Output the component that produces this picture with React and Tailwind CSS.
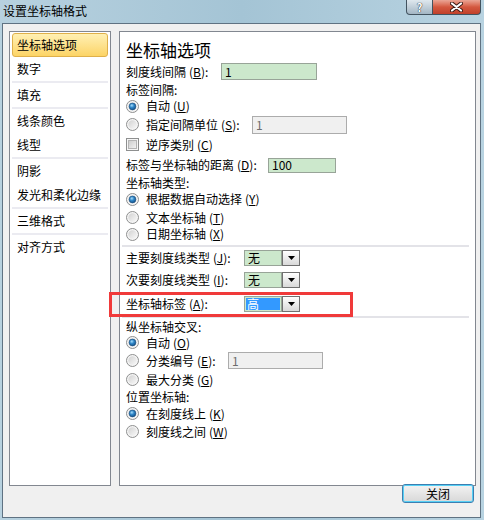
import React from "react";

// win7 style radio
const Radio = ({ on }) => (
  <svg width="13" height="13" viewBox="0 0 13 13" className="shrink-0">
    <defs>
      <linearGradient id="rgRing" x1="0" y1="0" x2="1" y2="1">
        <stop offset="0" stopColor="#d2d2d2" />
        <stop offset="1" stopColor="#f8f8f8" />
      </linearGradient>
      <radialGradient id="rgDot" cx="0.4" cy="0.35" r="0.7">
        <stop offset="0" stopColor="#a6ddfb" />
        <stop offset="0.45" stopColor="#2f86c8" />
        <stop offset="1" stopColor="#124c82" />
      </radialGradient>
    </defs>
    <circle cx="6.5" cy="6.5" r="6" fill="#f4f4f4" stroke="#8e8f8f" />
    <circle cx="6.5" cy="6.5" r="4.2" fill="url(#rgRing)" />
    {on && <circle cx="6.5" cy="6.5" r="3.4" fill="url(#rgDot)" stroke="#1b4f7f" strokeWidth="0.6" />}
  </svg>
);

const Check = () => (
  <svg width="13" height="13" viewBox="0 0 13 13" className="shrink-0">
    <defs>
      <linearGradient id="cgIn" x1="0" y1="0" x2="1" y2="1">
        <stop offset="0" stopColor="#cbcbcb" />
        <stop offset="1" stopColor="#f4f4f4" />
      </linearGradient>
    </defs>
    <rect x="0.5" y="0.5" width="12" height="12" fill="#f6f6f6" stroke="#8e8f8f" />
    <rect x="2.5" y="2.5" width="8" height="8" fill="url(#cgIn)" stroke="#b4b4b4" />
  </svg>
);

const Acc = ({ k }) => (
  <span className="ml-[3px]">
    (<span className="underline underline-offset-1">{k}</span>)
  </span>
);

const Field = ({ value, w, h, off }) => (
  <div
    className={`flex items-center pl-[3px] ${w} ${h} border ${
      off ? "bg-[#f0f0f0] border-[#acacac] text-[#6d6d6d]" : "bg-[#cce8cc] border-[#98a498] text-black"
    }`}
  >
    {value}
  </div>
);

const Combo = ({ value, sel }) => (
  <div className="flex h-[16px] w-[56px]">
    <div className="flex items-center w-[38px] h-full bg-[#cce8cc] border border-[#98a498] p-[1px]">
      {sel ? (
        <span className="flex items-center w-full h-full bg-[#3399ff] text-white pl-[1px]">{value}</span>
      ) : (
        <span className="pl-[2px]">{value}</span>
      )}
    </div>
    <div className="flex items-center justify-center w-[18px] h-full border border-[#707070] bg-linear-to-b from-white to-[#d9d9d9]">
      <svg width="7" height="4" viewBox="0 0 7 4">
        <path d="M0 0h7L3.5 4z" fill="#000" />
      </svg>
    </div>
  </div>
);

const Sep = () => <div className="h-[2px] mx-[2px] bg-[#ebebf1]" />;

const Item = ({ children, active }) => (
  <div
    className={`h-[24px] mx-[2px] flex items-center pl-[4px] rounded-[3px] border ${
      active ? "border-[#dfb04a] bg-linear-to-b from-[#fff0b2] to-[#fcd465]" : "border-transparent"
    }`}
  >
    {children}
  </div>
);

const Row = ({ h, children }) => <div className={`flex items-center ${h}`}>{children}</div>;

const RadioRow = ({ h, on, children }) => (
  <Row h={h}>
    <Radio on={on} />
    <span className="ml-[7px] flex items-center">{children}</span>
  </Row>
);

export default function App() {
  return (
    <div className="relative w-[484px] h-[520px] overflow-hidden flex flex-col pl-[2px] pr-[3px] pb-[2px] bg-linear-to-r from-[#b7d1df] via-[#a4c4d5] to-[#b8d3e1] font-['Noto_Sans_CJK_SC','Noto_Sans',sans-serif] text-[12px] leading-[14px] text-black">
      {/* title bar */}
      <div className="flex justify-between h-[23px] shrink-0">
        <span className="pl-[1px] pt-[4px] text-[12px]">设置坐标轴格式</span>
        <div className="flex h-[15px]">
          <div className="w-[27px] h-full flex items-center justify-center border border-t-0 border-[#42535f] rounded-bl-[4px] bg-linear-to-b from-[#dfe8ee] to-[#a3b6c4]">
            <span className="text-white font-bold text-[11px] leading-[12px] [text-shadow:0_0_1px_#1f2b33,0_0_1px_#1f2b33]">?</span>
          </div>
          <div className="w-[48px] h-full flex items-center justify-center border border-t-0 border-l-0 border-[#42535f] rounded-br-[4px] bg-linear-to-b from-[#eaa595] via-[#d4583f] to-[#c0402a]">
            <svg width="13" height="10" viewBox="0 0 13 10">
              <path d="M2 1.5l9 7M11 1.5l-9 7" stroke="#3a1a14" strokeWidth="4" strokeLinecap="round" />
              <path d="M2 1.5l9 7M11 1.5l-9 7" stroke="#fff" strokeWidth="2.2" strokeLinecap="round" />
            </svg>
          </div>
        </div>
      </div>

      {/* client area */}
      <div className="flex-1 flex flex-col border border-[#5f7282] bg-[#f0f0f0]">
        <div className="flex gap-[8px] pl-[6px] pt-[7px] h-[462px]">
          {/* category list */}
          <div className="w-[102px] h-[455px] border border-[#828790] bg-white pt-[1px]">
            <Item active>坐标轴选项</Item>
            <Item>数字</Item>
            <Sep />
            <Item>填充</Item>
            <Sep />
            <Item>线条颜色</Item>
            <Item>线型</Item>
            <Sep />
            <Item>阴影</Item>
            <Item>发光和柔化边缘</Item>
            <Sep />
            <Item>三维格式</Item>
            <Sep />
            <Item>对齐方式</Item>
          </div>

          {/* options */}
          <div className="w-[357px] h-[455px] border border-[#828790] bg-white pl-[6px] flex flex-col">
            <div className="h-[29px] pt-[6px] flex items-center text-[17px] leading-[22px]">坐标轴选项</div>
            <Row h="h-[21px]">
              <span className="w-[95px] flex">刻度线间隔<Acc k="B" />:</span>
              <Field value="1" w="w-[96px]" h="h-[17px]" />
            </Row>
            <Row h="h-[16px]">标签间隔:</Row>
            <RadioRow h="h-[16px]" on>自动<Acc k="U" /></RadioRow>
            <Row h="h-[21px]">
              <Radio />
              <span className="ml-[7px] w-[106px] flex">指定间隔单位<Acc k="S" />:</span>
              <Field value="1" w="w-[95px]" h="h-[18px]" off />
            </Row>
            <Row h="h-[19px]">
              <Check />
              <span className="ml-[7px] flex">逆序类别<Acc k="C" /></span>
            </Row>
            <Row h="h-[22px]">
              <span className="w-[142px] flex">标签与坐标轴的距离<Acc k="D" />:</span>
              <Field value="100" w="w-[68px]" h="h-[15px]" />
            </Row>
            <Row h="h-[14px]">坐标轴类型:</Row>
            <RadioRow h="h-[18px]" on>根据数据自动选择<Acc k="Y" /></RadioRow>
            <RadioRow h="h-[19px]">文本坐标轴<Acc k="T" /></RadioRow>
            <RadioRow h="h-[14px]">日期坐标轴<Acc k="X" /></RadioRow>
            <div className="h-[9px] pt-[4px] -ml-[4px] mr-[6px]">
              <div className="h-[2px] bg-[#e3e3e8]" />
            </div>
            <Row h="h-[16px]">
              <span className="w-[118px] flex">主要刻度线类型<Acc k="J" />:</span>
              <Combo value="无" />
            </Row>
            <Row h="h-[28px]">
              <span className="w-[118px] flex">次要刻度线类型<Acc k="I" />:</span>
              <Combo value="无" />
            </Row>
            <Row h="h-[20px]">
              <span className="w-[118px] flex">坐标轴标签<Acc k="A" />:</span>
              <Combo value="高" sel />
            </Row>
            <div className="h-[5px] pt-[2px] -ml-[4px] mr-[6px]">
              <div className="h-[2px] bg-[#e3e3e8]" />
            </div>
            <Row h="h-[16px]">纵坐标轴交叉:</Row>
            <RadioRow h="h-[15px]" on>自动<Acc k="O" /></RadioRow>
            <Row h="h-[21px]">
              <Radio />
              <span className="ml-[7px] w-[82px] flex">分类编号<Acc k="E" />:</span>
              <Field value="1" w="w-[95px]" h="h-[17px]" off />
            </Row>
            <RadioRow h="h-[17px]">最大分类<Acc k="G" /></RadioRow>
            <Row h="h-[17px]">位置坐标轴:</Row>
            <RadioRow h="h-[17px]" on>在刻度线上<Acc k="K" /></RadioRow>
            <RadioRow h="h-[19px]">刻度线之间<Acc k="W" /></RadioRow>
          </div>
        </div>

        <div className="flex justify-end pr-[6px] mt-[-2px]">
          <button
            type="button"
            className="w-[72px] h-[19px] rounded-[3px] border border-[#3c7fb1] shadow-[inset_0_0_0_1px_#56d0f5] bg-linear-to-b from-[#f3f3f3] to-[#d8d8d8] text-[12px] leading-[14px] flex items-center justify-center"
          >
            关闭
          </button>
        </div>
      </div>

      {/* annotation box */}
      <div className="absolute left-[109px] top-[292px] w-[244px] h-[25px] border-[3px] border-[#f03a3a]" />
    </div>
  );
}
